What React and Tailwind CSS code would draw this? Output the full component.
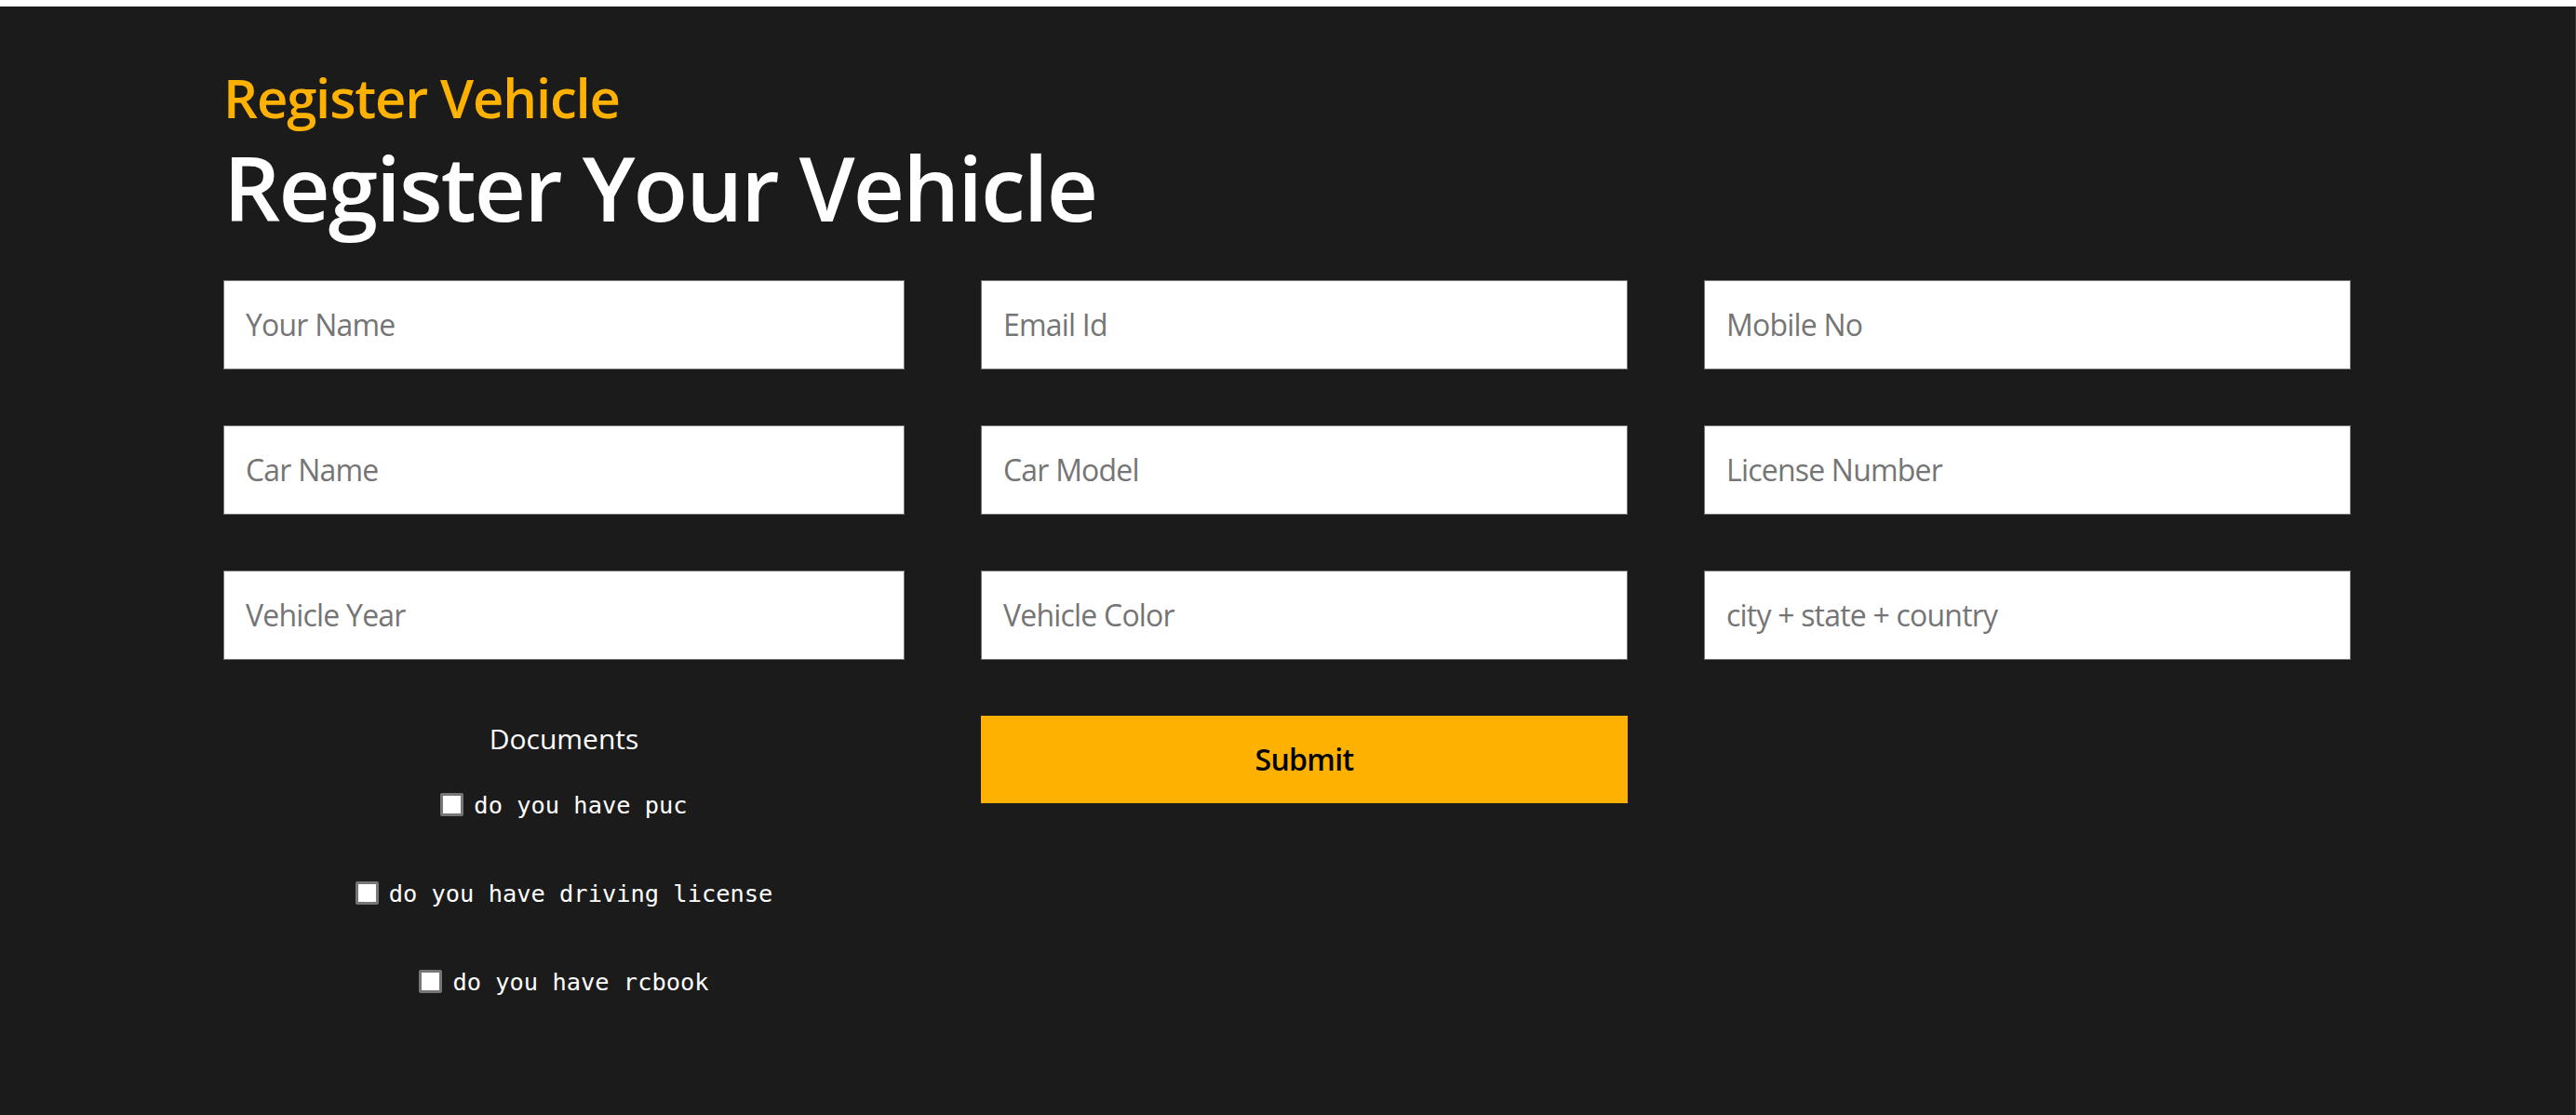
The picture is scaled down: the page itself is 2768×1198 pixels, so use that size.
import { useState } from 'react';

const fields = [
  'Your Name',
  'Email Id',
  'Mobile No',
  'Car Name',
  'Car Model',
  'License Number',
  'Vehicle Year',
  'Vehicle Color',
  'city + state + country',
];

const docs = ['do you have puc', 'do you have driving license', 'do you have rcbook'];

export default function App() {
  const [values, setValues] = useState({});
  const [checked, setChecked] = useState({});

  const handleChange = (name) => (e) => {
    setValues({ ...values, [name]: e.target.value });
  };

  const toggle = (name) => {
    setChecked({ ...checked, [name]: !checked[name] });
  };

  return (
    <div className="min-h-screen bg-white pt-[7px] font-['Open_Sans',sans-serif]">
      <div className="min-h-[1191px] bg-[#1b1b1b] border-r border-[#3a3a3a] pl-[240px] pt-[66px]">
        {/* Heading */}
        <h3 className="text-[58px] leading-[1.1] font-semibold tracking-[-0.02em] text-[#ffb100]">Register Vehicle</h3>
        <h1 className="mt-[14px] text-[96px] leading-[1.05] font-semibold tracking-[-0.02em] text-white">Register Your Vehicle</h1>

        {/* Form */}
        <form
          className="mt-[49px] grid grid-cols-[732px_695px_695px] gap-x-[82px] gap-y-[60px]"
          onSubmit={(e) => e.preventDefault()}
        >
          {fields.map((f) => (
            <input
              key={f}
              type="text"
              placeholder={f}
              value={values[f] || ''}
              onChange={handleChange(f)}
              className="h-[96px] w-full border border-[#767676] bg-white px-[23px] text-[32px] tracking-[-0.025em] text-black placeholder:text-[#757575] focus:outline-none"
            />
          ))}

          {/* Documents */}
          <div className="flex flex-col items-center pt-[10px]">
            <p className="text-[30px] leading-none text-white">Documents</p>
            <div className="mt-[36px] flex flex-col items-center gap-[55px]">
              {docs.map((d) => (
                <label key={d} className="flex h-[40px] items-center gap-[11px] cursor-pointer">
                  <input
                    type="checkbox"
                    checked={!!checked[d]}
                    onChange={() => toggle(d)}
                    className="h-[25px] w-[25px] appearance-none rounded-[2px] border-[3px] border-[#767676] bg-white checked:bg-[#ffb100]"
                  />
                  <span className="font-['DejaVu_Sans_Mono',monospace] text-[25.4px] text-white">{d}</span>
                </label>
              ))}
            </div>
          </div>

          <div>
            <button
              type="submit"
              className="h-[94px] w-full bg-[#ffb100] text-[32px] font-semibold tracking-[-0.02em] text-black"
            >
              Submit
            </button>
          </div>
        </form>
      </div>
    </div>
  );
}
